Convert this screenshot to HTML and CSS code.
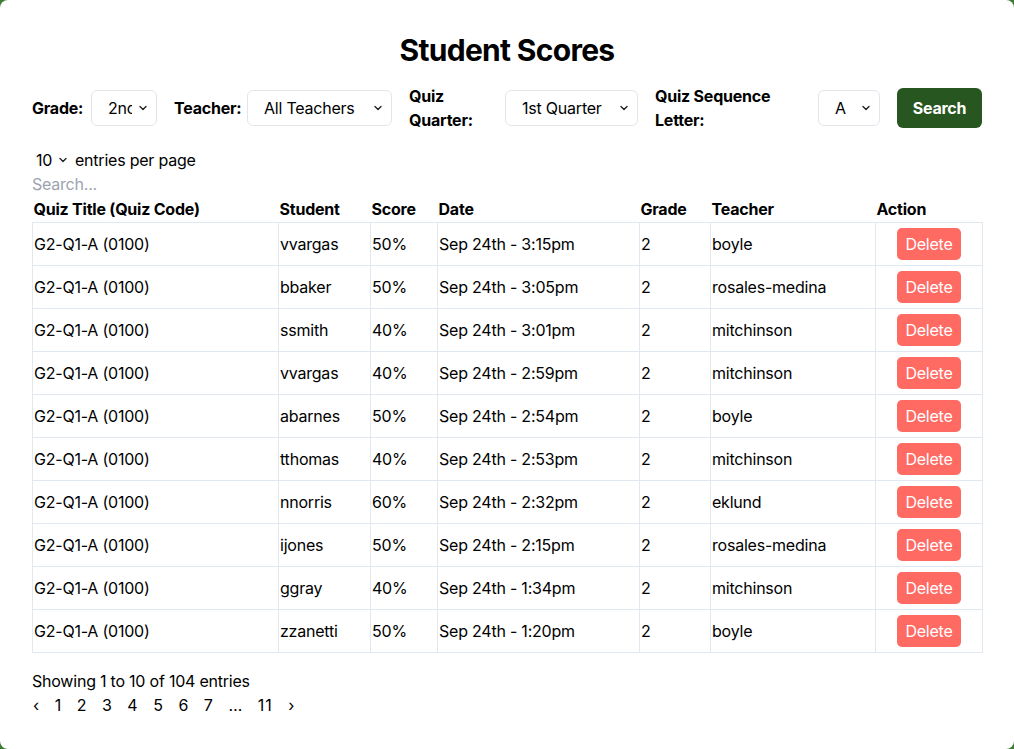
FILE: index.html
```html
<!DOCTYPE html>
<html lang="en">
<head>
<meta charset="utf-8">
<title>Student Scores</title>
<link rel="stylesheet" href="styles.css">
</head>
<body>
<main class="card">
  <h1 class="title">Student Scores</h1>
  <form class="filters">
    <div class="group">
      <label class="lbl lbl-grade">Grade:</label>
      <select class="sel sel-grade"><option>2nd</option></select>
    </div>
    <div class="group">
      <label class="lbl lbl-teacher">Teacher:</label>
      <select class="sel sel-teacher"><option>All Teachers</option></select>
    </div>
    <div class="group">
      <label class="lbl lbl-quarter">Quiz Quarter:</label>
      <select class="sel sel-quarter"><option>1st Quarter</option></select>
    </div>
    <div class="group">
      <label class="lbl lbl-seq">Quiz Sequence Letter:</label>
      <select class="sel sel-letter"><option>A</option></select>
    </div>
    <button type="button" class="btn-search">Search</button>
  </form>

  <div class="per-page">
    <select class="sel-entries"><option>10</option></select>
    <span>entries per page</span>
  </div>
  <input class="search-input" type="text" placeholder="Search...">

  <table class="scores">
    <colgroup>
      <col style="width:246px"><col style="width:92px"><col style="width:67px"><col style="width:202px"><col style="width:71px"><col style="width:165px"><col style="width:107px">
    </colgroup>
    <thead>
      <tr><th>Quiz Title (Quiz Code)</th><th>Student</th><th>Score</th><th>Date</th><th>Grade</th><th>Teacher</th><th>Action</th></tr>
    </thead>
    <tbody>
      <tr><td>G2-Q1-A (0100)</td><td>vvargas</td><td>50%</td><td>Sep 24th - 3:15pm</td><td>2</td><td>boyle</td><td class="act"><button class="btn-del">Delete</button></td></tr>
      <tr><td>G2-Q1-A (0100)</td><td>bbaker</td><td>50%</td><td>Sep 24th - 3:05pm</td><td>2</td><td>rosales-medina</td><td class="act"><button class="btn-del">Delete</button></td></tr>
      <tr><td>G2-Q1-A (0100)</td><td>ssmith</td><td>40%</td><td>Sep 24th - 3:01pm</td><td>2</td><td>mitchinson</td><td class="act"><button class="btn-del">Delete</button></td></tr>
      <tr><td>G2-Q1-A (0100)</td><td>vvargas</td><td>40%</td><td>Sep 24th - 2:59pm</td><td>2</td><td>mitchinson</td><td class="act"><button class="btn-del">Delete</button></td></tr>
      <tr><td>G2-Q1-A (0100)</td><td>abarnes</td><td>50%</td><td>Sep 24th - 2:54pm</td><td>2</td><td>boyle</td><td class="act"><button class="btn-del">Delete</button></td></tr>
      <tr><td>G2-Q1-A (0100)</td><td>tthomas</td><td>40%</td><td>Sep 24th - 2:53pm</td><td>2</td><td>mitchinson</td><td class="act"><button class="btn-del">Delete</button></td></tr>
      <tr><td>G2-Q1-A (0100)</td><td>nnorris</td><td>60%</td><td>Sep 24th - 2:32pm</td><td>2</td><td>eklund</td><td class="act"><button class="btn-del">Delete</button></td></tr>
      <tr><td>G2-Q1-A (0100)</td><td>ijones</td><td>50%</td><td>Sep 24th - 2:15pm</td><td>2</td><td>rosales-medina</td><td class="act"><button class="btn-del">Delete</button></td></tr>
      <tr><td>G2-Q1-A (0100)</td><td>ggray</td><td>40%</td><td>Sep 24th - 1:34pm</td><td>2</td><td>mitchinson</td><td class="act"><button class="btn-del">Delete</button></td></tr>
      <tr><td>G2-Q1-A (0100)</td><td>zzanetti</td><td>50%</td><td>Sep 24th - 1:20pm</td><td>2</td><td>boyle</td><td class="act"><button class="btn-del">Delete</button></td></tr>
    </tbody>
  </table>

  <div class="info">Showing 1 to 10 of 104 entries</div>
  <nav class="pager">
    <a>‹</a><a>1</a><a>2</a><a>3</a><a>4</a><a>5</a><a>6</a><a>7</a><a>…</a><a class="wide">11</a><a>›</a>
  </nav>
</main>
</body>
</html>
```

FILE: styles.css
```css
html, body {
  margin: 0;
  padding: 0;
  height: 100%;
}
body {
  background: #3f7a36;
  font-family: Inter, "Liberation Sans", sans-serif;
  font-size: 16px;
  line-height: 24px;
  letter-spacing: -0.22px;
  color: #000;
}
.card {
  box-sizing: border-box;
  height: 100vh;
  background: #fff;
  border-radius: 8px;
  padding: 32px 32px 0;
}
.title {
  margin: 0 0 16px;
  text-align: center;
  font-size: 30px;
  line-height: 36px;
  font-weight: 700;
  letter-spacing: -0.7px;
}
.filters {
  display: flex;
  align-items: center;
  gap: 17px;
  height: 48px;
  margin: 0 0 16px;
}
.group {
  display: flex;
  align-items: center;
  gap: 7px;
  flex: none;
}
.lbl {
  font-weight: 700;
  flex: none;
}
.lbl-grade { width: 52px; }
.lbl-teacher { width: 66px; }
.lbl-quarter { width: 89px; }
.lbl-seq { width: 156px; }
.sel {
  -webkit-appearance: none;
  appearance: none;
  box-sizing: border-box;
  height: 36px;
  border: 1px solid #e2e5ea;
  border-radius: 6px;
  background-color: #fff;
  background-image: url("data:image/svg+xml,%3Csvg xmlns='http://www.w3.org/2000/svg' width='8' height='6' viewBox='0 0 8 6'%3E%3Cpath d='M1 1.5l3 3 3-3' fill='none' stroke='%23222' stroke-width='1.4' stroke-linecap='round' stroke-linejoin='round'/%3E%3C/svg%3E");
  background-repeat: no-repeat;
  background-position: right 9px center;
  font: inherit;
  letter-spacing: inherit;
  color: #000;
  padding: 0 24px 0 16px;
  overflow: hidden;
  flex: none;
}
.sel-grade { width: 66px; }
.sel-teacher { width: 145px; }
.sel-quarter { width: 133px; }
.sel-letter { width: 62px; }
.btn-search {
  flex: none;
  height: 40px;
  width: 85px;
  border: 0;
  border-radius: 6px;
  background: #285620;
  color: #fff;
  font: inherit;
  letter-spacing: inherit;
  font-weight: 700;
  padding: 0;
}
.per-page {
  display: flex;
  align-items: center;
  height: 24px;
  gap: 4px;
}
.sel-entries {
  -webkit-appearance: none;
  appearance: none;
  border: 0;
  background: transparent url("data:image/svg+xml,%3Csvg xmlns='http://www.w3.org/2000/svg' width='8' height='6' viewBox='0 0 8 6'%3E%3Cpath d='M1 1.5l3 3 3-3' fill='none' stroke='%23222' stroke-width='1.4' stroke-linecap='round' stroke-linejoin='round'/%3E%3C/svg%3E") no-repeat right 4px center;
  font: inherit;
  letter-spacing: inherit;
  color: #000;
  padding: 0 18px 0 4px;
  height: 24px;
}
.search-input {
  display: block;
  box-sizing: border-box;
  width: 300px;
  height: 24px;
  border: 0;
  padding: 0;
  font: inherit;
  letter-spacing: inherit;
  outline: none;
}
.search-input::placeholder { color: #9ca3af; }
.scores {
  width: 950px;
  table-layout: fixed;
  border-collapse: collapse;
  margin-top: 1px;
}
.scores th {
  text-align: left;
  font-weight: 700;
  padding: 0 1px 1px;
  line-height: 24px;
}
.scores td {
  border: 1px solid #e2e8f0;
  padding: 5px 1px;
  vertical-align: middle;
}
.scores td.act { text-align: center; }
.btn-del {
  height: 32px;
  border: 0;
  border-radius: 5px;
  background: #ff6a63;
  color: #fff;
  font: inherit;
  letter-spacing: inherit;
  padding: 0 8px;
}
.info {
  margin-top: 16px;
}
.pager {
  display: flex;
  gap: 15.5px;
  letter-spacing: 0;
  padding-left: 1px;
}
.pager a { cursor: pointer; }
.pager a.wide { letter-spacing: 1px; }
```
